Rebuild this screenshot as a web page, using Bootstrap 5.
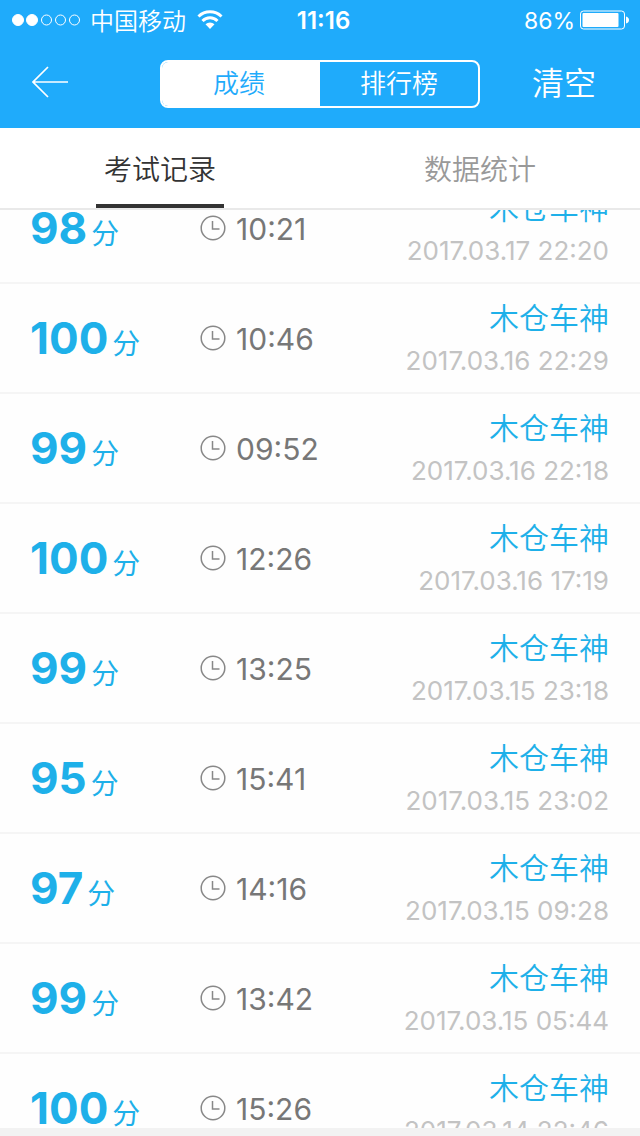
<!DOCTYPE html>
<html lang="zh-CN">
<head>
<meta charset="utf-8">
<meta name="viewport" content="width=device-width, initial-scale=1">
<title>考试记录</title>
<link href="https://cdn.jsdelivr.net/npm/bootstrap@5.3.0/dist/css/bootstrap.min.css" rel="stylesheet">
<style>
  :root { --sky: #1fabfb; --score: #1eb0e9; }
  body { font-family: Inter, "Noto Sans CJK SC", sans-serif; background: #f2f2f2; color: #333; }
  .app-header { background: var(--sky); color: #fff; }
  .status-bar { height: 40px; font-size: 24px; line-height: 40px; padding: 0 11px 0 12px; }
  .status-side { flex: 1 1 0; }
  .carrier { font-weight: 350; padding-top: 3px; }
  .clock-now { font-size: 24px; font-weight: 600; font-kerning: none; padding: 2px 0 0 6px; }
  .battery-text { font-size: 23px; padding-top: 2px; }
  .title-bar { height: 88px; }
  .bar-btn { background: none; border: 0; color: #fff; font-size: 32px; line-height: 40px; padding: 0; font-weight: 350; }
  .segment { border: 2px solid #fff; border-radius: 8px; height: 48px; overflow: hidden; }
  .segment button { background: none; border: 0; color: #fff; font-size: 26px; line-height: 44px; padding: 0; font-weight: 350; }
  .segment button.active { background: #fff; color: var(--sky); padding-right: 4px; }
  .tab-bar { background: #fff; border-bottom: 2px solid #e9e9e9; height: 82px; }
  .tab-bar a { color: #999; font-size: 28px; height: 80px; font-weight: 350; text-decoration: none; }
  .tab-bar .tab-label { display: inline-block; width: 128px; height: 80px; line-height: 84px; }
  .tab-bar .active { color: #333; }
  .tab-bar .active .tab-label { border-bottom: 4px solid #333; }
  .records { background: #fefefe; overflow-y: auto; scrollbar-width: none; min-height: 0; margin-bottom: 8px; }
  .records::-webkit-scrollbar { display: none; }
  .record { height: 110px; border-bottom: 2px solid #f5f5f5; padding: 0 31px 0 30px; }
  .score { color: var(--score); font-size: 28px; width: 170px; line-height: 60px; padding-top: 6px; }
  .score b { font-size: 44px; font-weight: 700; margin-right: 4px; }
  .spent { color: #777; font-size: 30px; line-height: 44px; gap: 10px; }
  .spent-time { padding-top: 2px; }
  .owner { color: var(--score); font-size: 30px; line-height: 44px; font-weight: 350; }
  .taken { color: #c3c3c3; font-size: 26px; line-height: 42px; }
  .record-meta { padding-top: 2px; }
</style>
</head>
<body>
<div class="d-flex flex-column vh-100">
  <header class="app-header flex-shrink-0">
    <div class="status-bar d-flex align-items-center">
      <div class="status-side d-flex align-items-center">
        <svg width="70" height="14" viewBox="0 0 70 14" fill="none" stroke="#fff" aria-hidden="true">
          <circle cx="6" cy="7" r="5.5" fill="#fff"/><circle cx="20" cy="7" r="5.5" fill="#fff"/>
          <circle cx="34.500" cy="7" r="5"/><circle cx="48.500" cy="7" r="5"/><circle cx="62.500" cy="7" r="5"/>
        </svg>
        <span class="carrier ms-2">中国移动</span>
        <svg class="ms-2" width="36" height="22" viewBox="0 0 36 22" fill="none" stroke="#fff" stroke-width="3" aria-hidden="true">
          <path d="M4.500 7.500a16.500 16.500 0 0 1 23 0M8.500 12a10.500 10.500 0 0 1 15 0"/>
          <path d="M16 20l-4.500-4.800a6.500 6.500 0 0 1 9 0z" fill="#fff" stroke="none"/>
        </svg>
      </div>
      <span class="clock-now">11:16</span>
      <div class="status-side d-flex align-items-center justify-content-end">
        <span class="battery-text me-1">86%</span>
        <svg width="50" height="20" viewBox="0 0 50 20" aria-hidden="true">
          <rect x="1.500" y="1" width="44" height="18" rx="3" fill="none" stroke="#fff"/>
          <rect x="3.500" y="3" width="36" height="14" rx="1" fill="#fff"/>
          <path d="M47 6.500q3 1 3 3.500t-3 3.500z" fill="#fff"/>
        </svg>
      </div>
    </div>
    <div class="title-bar row g-0 align-items-center">
      <div class="col-3 ps-4">
        <button class="bar-btn d-flex ms-2 mb-1" type="button" aria-label="返回">
          <svg width="38" height="32" viewBox="0 0 38 32" fill="none" stroke="#fff" stroke-width="1.700"><path d="M16 1L1 16l15 15M1 16h35"/></svg>
        </button>
      </div>
      <div class="col-6">
        <div class="segment d-flex">
          <button class="active w-50" type="button">成绩</button>
          <button class="w-50" type="button">排行榜</button>
        </div>
      </div>
      <div class="col-3 text-center ps-2">
        <button class="bar-btn" type="button">清空</button>
      </div>
    </div>
  </header>
  <nav class="tab-bar d-flex text-center flex-shrink-0">
    <a class="active w-50" href="#records"><span class="tab-label">考试记录</span></a>
    <a class="w-50" href="#stats"><span class="tab-label">数据统计</span></a>
  </nav>
  <main class="records flex-grow-1" id="records"></main>
</div>
<template id="record-row">
  <div class="record d-flex align-items-center">
    <div class="score"><b></b><span>分</span></div>
    <div class="spent d-flex align-items-center">
      <svg width="26" height="26" viewBox="0 0 26 26" fill="none" stroke="#888" stroke-width="1.500" aria-hidden="true"><circle cx="13" cy="13" r="11.800"/><path d="M12.500 6v8h7"/></svg>
      <span class="spent-time"></span>
    </div>
    <div class="record-meta ms-auto text-end">
      <div class="owner">木仓车神</div>
      <div class="taken"></div>
    </div>
  </div>
</template>
<script src="https://cdn.jsdelivr.net/npm/bootstrap@5.3.0/dist/js/bootstrap.bundle.min.js"></script>
<script>
  const rows = [
    [98, '10:21', '2017.03.17 22:20'],
    [100, '10:46', '2017.03.16 22:29'],
    [99, '09:52', '2017.03.16 22:18'],
    [100, '12:26', '2017.03.16 17:19'],
    [99, '13:25', '2017.03.15 23:18'],
    [95, '15:41', '2017.03.15 23:02'],
    [97, '14:16', '2017.03.15 09:28'],
    [99, '13:42', '2017.03.15 05:44'],
    [100, '15:26', '2017.03.14 22:46']
  ];
  const list = document.getElementById('records');
  const tpl = document.getElementById('record-row');
  for (const [score, spent, taken] of rows) {
    const row = tpl.content.cloneNode(true);
    row.querySelector('b').textContent = score;
    row.querySelector('.spent-time').textContent = spent;
    row.querySelector('.taken').textContent = taken;
    list.append(row);
  }
  // The list opens slightly scrolled, partway through the newest record.
  list.scrollTop = 36;
</script>
</body>
</html>
